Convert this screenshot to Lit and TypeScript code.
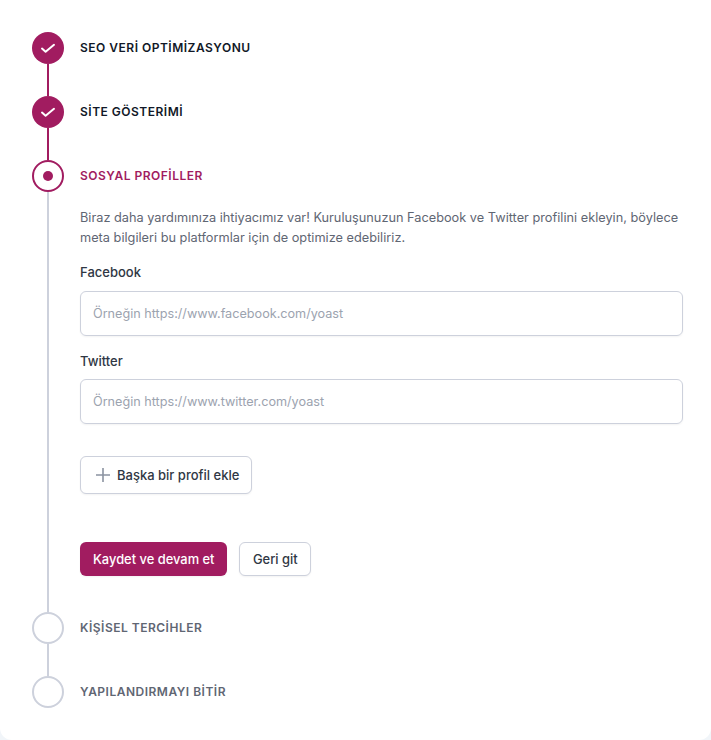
import { LitElement, html, css } from "lit";
import { customElement } from "lit/decorators.js";

const check = html`<svg width="16" height="16" viewBox="0 0 16 16" fill="none" stroke="#fff" stroke-width="2" stroke-linecap="round" stroke-linejoin="round"><path d="M2 8.6 5.6 11.8 14 4.8"/></svg>`;

@customElement("app-root")
export class AppRoot extends LitElement {
  static styles = css`
    :host { display: block; width: 711px; height: 740px; background: #f1f5f9; font-family: Inter, sans-serif; }
    * { box-sizing: border-box; }
    .card { background: #fff; height: 740px; border-bottom-left-radius: 12px; border-bottom-right-radius: 12px; padding: 32px 28px 0 32px; }
    .step { display: flex; gap: 16px; }
    .rail { width: 32px; display: flex; flex-direction: column; align-items: center; flex: none; }
    .dot { width: 32px; height: 32px; border-radius: 50%; flex: none; display: flex; align-items: center; justify-content: center; }
    .done { background: #a11c60; }
    .current { border: 2px solid #a11c60; background: #fff; }
    .current i { width: 10px; height: 10px; border-radius: 50%; background: #a11c60; display: block; }
    .todo { border: 2px solid #cdd1dc; background: #fff; }
    .line { width: 2px; flex: 1; background: #cdd1dc; }
    .line.on { background: #a11c60; }
    .body { flex: 1; min-width: 0; }
    .title { height: 32px; line-height: 32px; font-size: 12px; font-weight: 600; letter-spacing: .5px; color: #111827; white-space: nowrap; }
    .title.cur { color: #a11c60; }
    .title.off { color: #5f6673; }
    .s64 { height: 64px; }
    p { margin: 16px 0 0; font-size: 12.75px; line-height: 20px; color: #5f6673; }
    label { display: block; font-size: 13px; font-weight: 500; line-height: 20px; color: #2f3744; margin-top: 15px; }
    .first { margin-top: 14px; margin-bottom: 9px; }
    .first + .input { margin-top: 0; }
    .input { height: 45px; margin-top: 8px; border: 1px solid #cdd1dc; border-radius: 6px; padding: 0 12px; font-size: 12.65px; color: #9ca3af; display: flex; align-items: center; box-shadow: 0 1px 2px rgba(0,0,0,.05); }
    .btn { display: inline-flex; align-items: center; border-radius: 6px; font-size: 12.9px; font-weight: 500; height: 34px; padding: 0 13px; white-space: nowrap; }
    .sec { background: #fff; border: 1px solid #cdd1dc; color: #2f3744; box-shadow: 0 1px 2px rgba(0,0,0,.05); }
    .pri { background: #a11c60; color: #fff; box-shadow: 0 1px 2px rgba(0,0,0,.05); }
    .back { padding: 0 12.5px; }
    .add { height: 38px; margin-top: 32px; padding: 0 12px 0 14px; gap: 6px; font-size: 13px; }
    .actions { display: flex; gap: 12px; margin-top: 48px; height: 70px; align-items: flex-start; }
  `;
  render() {
    return html`<div class="card">
      <div class="step s64"><div class="rail"><div class="dot done">${check}</div><div class="line on"></div></div><div class="body"><div class="title">SEO VERİ OPTİMİZASYONU</div></div></div>
      <div class="step s64"><div class="rail"><div class="dot done">${check}</div><div class="line on"></div></div><div class="body"><div class="title">SİTE GÖSTERİMİ</div></div></div>
      <div class="step"><div class="rail"><div class="dot current"><i></i></div><div class="line"></div></div>
        <div class="body">
          <div class="title cur">SOSYAL PROFİLLER</div>
          <p>Biraz daha yardımınıza ihtiyacımız var! Kuruluşunuzun Facebook ve Twitter profilini ekleyin, böylece meta bilgileri bu platformlar için de optimize edebiliriz.</p>
          <label class="first">Facebook</label>
          <div class="input">Örneğin https://www.facebook.com/yoast</div>
          <label>Twitter</label>
          <div class="input">Örneğin https://www.twitter.com/yoast</div>
          <div class="btn sec add"><svg width="16" height="16" viewBox="0 0 16 16" fill="none" stroke="#8b93a1" stroke-width="1.6" stroke-linecap="butt"><path d="M8 1v14M1 8h14"/></svg>Başka bir profil ekle</div>
          <div class="actions"><div class="btn pri">Kaydet ve devam et</div><div class="btn sec back">Geri git</div></div>
        </div></div>
      <div class="step s64"><div class="rail"><div class="dot todo"></div><div class="line"></div></div><div class="body"><div class="title off">KİŞİSEL TERCİHLER</div></div></div>
      <div class="step"><div class="rail"><div class="dot todo"></div></div><div class="body"><div class="title off">YAPILANDIRMAYI BİTİR</div></div></div>
    </div>`;
  }
}
